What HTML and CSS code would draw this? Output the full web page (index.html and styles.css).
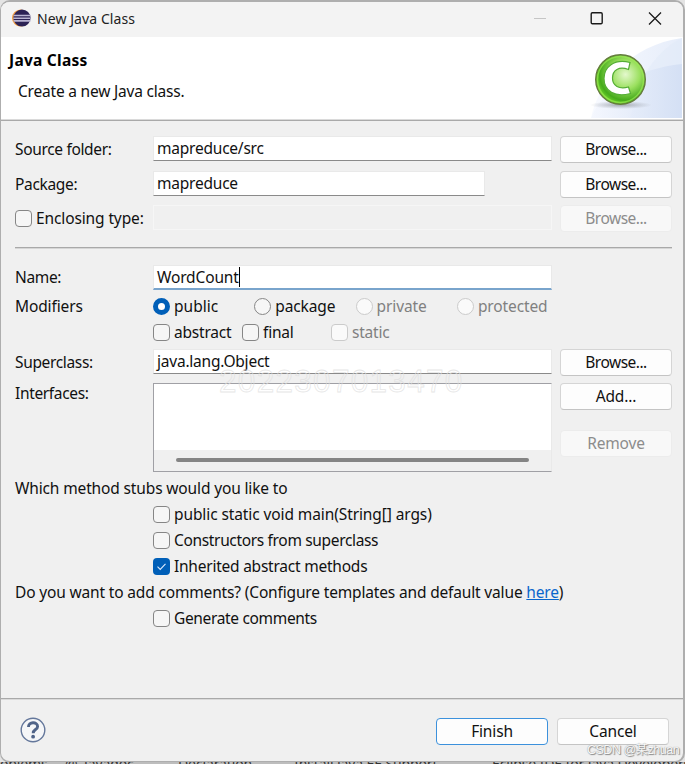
FILE: index.html
```html
<!DOCTYPE html>
<html lang="en">
<head>
<meta charset="utf-8">
<title>New Java Class</title>
<link rel="stylesheet" href="styles.css">
</head>
<body>
<div class="desktop">
  <div class="dialog">
    <header class="titlebar">
      <svg class="app-icon" width="20" height="20" viewBox="0 0 20 20">
        <circle cx="9.600" cy="9" r="8.600" fill="#f39a3b"/>
        <circle cx="11" cy="9" r="8.600" fill="#2c2255"/>
        <path d="M2.600 6.500h16.800M2.300 9.200h17.200M2.600 11.900h16.800" stroke="#b9b4d2" stroke-width="1.600"/>
      </svg>
      <span class="window-title">New Java Class</span>
      <svg class="window-controls" width="132" height="16" viewBox="0 0 132 16">
        <path d="M2 7.500h12" stroke="#c5c5c5"/>
        <rect x="59.200" y="1.700" width="11" height="11" rx="1.200" fill="none" stroke="#1a1a1a" stroke-width="1.400"/>
        <path d="M117 1.500l12 12M129 1.500l-12 12" stroke="#1a1a1a" stroke-width="1.300"/>
      </svg>
    </header>

    <section class="banner">
      <div class="banner-text">
        <h1>Java Class</h1>
        <p>Create a new Java class.</p>
      </div>
      <svg class="banner-art" width="93" height="82" viewBox="0 0 93 82">
        <defs>
          <linearGradient id="sky" x1="0" x2="1"><stop offset="0" stop-color="#f8faff"/><stop offset="1" stop-color="#e6edfa"/></linearGradient>
          <linearGradient id="sky2" x1="0" x2="1"><stop offset="0" stop-color="#f4f7fe"/><stop offset="1" stop-color="#cfdcf3"/></linearGradient>
          <radialGradient id="ball" cx=".6" cy=".4" r=".65"><stop offset="0" stop-color="#e4f8cd"/><stop offset=".45" stop-color="#9be05f"/><stop offset=".8" stop-color="#45aa1b"/><stop offset="1" stop-color="#79df30"/></radialGradient>
          <radialGradient id="shade"><stop offset="0" stop-color="#8f949c" stop-opacity=".8"/><stop offset="1" stop-color="#a0a5ad" stop-opacity="0"/></radialGradient>
        </defs>
        <path d="M1 81C7 48 40 8 92 1v80z" fill="url(#sky)"/>
        <path d="M92 1C75 9 62 24 52 42L40 81h52z" fill="#dfe8f8" opacity=".4"/>
        <path d="M1 81C12 53 46 32 92 27v54z" fill="url(#sky2)" opacity=".75"/>
        <ellipse cx="31" cy="68" rx="31" ry="4" fill="url(#shade)"/>
        <circle cx="30.500" cy="42.500" r="24.800" fill="url(#ball)" stroke="#657c3d" stroke-width="1.400"/>
        <circle cx="30.500" cy="42.500" r="23" fill="none" stroke="#a4ee59" stroke-width="1.500" opacity=".6"/>
        <path d="M40 25.500C24 21.500 14 30 14 41.500C14 54 25 61 40.500 56.500L38.500 50C29 52.500 22.500 49 22.500 41C22.500 33 29 29 38.500 32.500Z" fill="#fff" stroke="#55ad35" stroke-width="1.200"/>
      </svg>
    </section>

    <main class="form">
      <div class="row">
        <label class="label t-tight">Source folder:</label>
        <div class="field"><span>mapreduce/src</span></div>
        <button class="btn btn-browse">Browse...</button>
      </div>
      <div class="row row-package">
        <label class="label t-tight">Package:</label>
        <div class="field field-short"><span>mapreduce</span></div>
        <button class="btn btn-browse">Browse...</button>
      </div>
      <div class="row row-enclosing">
        <label class="label check-label"><i class="check"></i><span>Enclosing type:</span></label>
        <div class="field field-off"></div>
        <button class="btn btn-browse btn-off">Browse...</button>
      </div>
      <hr class="divider">
      <div class="row row-name">
        <label class="label t-tight">Name:</label>
        <div class="field field-focus"><span>WordCount</span><i class="caret"></i></div>
      </div>
      <div class="row row-choice">
        <span class="label">Modifiers</span>
        <div class="radios">
          <label><i class="radio radio-on"></i><span>public</span></label>
          <label><i class="radio"></i><span>package</span></label>
          <label class="off"><i class="radio"></i><span>private</span></label>
          <label class="off"><i class="radio"></i><span>protected</span></label>
        </div>
      </div>
      <div class="row row-choice">
        <span class="label"></span>
        <div class="checks">
          <label><i class="check"></i><span>abstract</span></label>
          <label><i class="check"></i><span>final</span></label>
          <label class="off"><i class="check"></i><span>static</span></label>
        </div>
      </div>
      <div class="row row-super">
        <label class="label t-tight">Superclass:</label>
        <div class="field"><span>java.lang.Object</span></div>
        <button class="btn btn-browse">Browse...</button>
      </div>
      <div class="row row-interfaces">
        <label class="label t-tight">Interfaces:</label>
        <div class="list"><div class="scrollbar"><div class="thumb"></div></div></div>
        <div class="side">
          <button class="btn">Add...</button>
          <button class="btn btn-off">Remove</button>
        </div>
      </div>
      <div class="line t-stubs">Which method stubs would you like to</div>
      <label class="line option t-main"><i class="check"></i><span>public static void main(String[] args)</span></label>
      <label class="line option t-tight"><i class="check"></i><span>Constructors from superclass</span></label>
      <label class="line option t-inherit"><i class="check check-on"><svg width="17" height="17" viewBox="0 0 17 17"><path d="M4.500 8.700l2.700 2.700 5.300-5.500" fill="none" stroke="#dcecff" stroke-width="1.100"/></svg></i><span>Inherited abstract methods</span></label>
      <div class="line t-comments">Do you want to add comments? (Configure templates and default value <a>here</a>)</div>
      <label class="line option t-tight"><i class="check"></i><span>Generate comments</span></label>
    </main>

    <footer class="footer">
      <svg class="help" width="26" height="26" viewBox="0 0 26 26">
        <circle cx="13" cy="13" r="11.800" fill="#f5f6f8" stroke="#64779b" stroke-width="1.400"/>
        <path d="M8.500 10C8.200 4.500 17.600 4.300 17.600 9.400C17.600 12.800 13.200 12.300 13.200 16.200" fill="none" stroke="#506489" stroke-width="2.900"/>
        <circle cx="13.100" cy="19.700" r="1.900" fill="#506489"/>
      </svg>
      <button class="btn btn-primary">Finish</button>
      <button class="btn">Cancel</button>
    </footer>
  </div>
  <div class="behind">
    <span class="tab-a">oblems</span><span class="tab-b">@</span><span class="tab-c">Javadoc</span><span class="tab-d">Declaration</span><span class="tab-e">Install Java EE Support</span><span class="tab-f">Eclipse IDE for Java Developers</span>
  </div>
  <div class="serial">2022307013470</div>
  <div class="credit">CSDN @某zhuan</div>
</div>
</body>
</html>
```
FILE: styles.css
```css
* { box-sizing: border-box; }
body {
  margin: 0;
  background: #e4e4e4;
  color: #111;
  font: 15.5px/26px "Noto Sans", "Noto Sans CJK SC", sans-serif;
  letter-spacing: -.12px;
}
i { font-style: normal; }
.desktop { position: relative; width: 685px; height: 764px; overflow: hidden; }
.dialog {
  display: flex;
  flex-direction: column;
  width: 685px;
  height: 763px;
  border: 2px solid #aeaeae;
  border-left-width: 1.5px;
  border-radius: 10px;
  background: #f0f0f0;
  overflow: hidden;
}
.titlebar {
  display: flex;
  align-items: center;
  flex: none;
  height: 35px;
  padding: 0 19px 2px 10px;
  background: #f3f3f3;
}
.app-icon { margin-top: 1px; }
.window-title { margin-left: 6px; font-size: 14px; letter-spacing: .08px; color: #222; }
.window-controls { margin-left: auto; }
.banner {
  display: flex;
  justify-content: space-between;
  flex: none;
  height: 84px;
  background: #fff;
  border-bottom: 1px solid #a9a9a9;
  box-shadow: inset 0 -1px #dadada;
}
.banner-text { padding: 10px 0 0 8px; }
.banner h1 { margin: 0; font-size: 15.5px; line-height: 26px; letter-spacing: .25px; color: #000; }
.banner p { margin: 5px 0 0 9px; letter-spacing: -.2px; }
.form { flex: 1; padding: 15px 11px 0 14px; }
.row { display: flex; height: 27px; }
.label { width: 138px; flex: none; white-space: nowrap; }
.t-tight { letter-spacing: -.34px; }
.t-stubs { letter-spacing: -.14px; }
.t-main { letter-spacing: -.1px; }
.t-inherit { letter-spacing: -.23px; }
.t-comments { letter-spacing: -.16px; }
.field {
  display: flex;
  width: 399px;
  height: 25px;
  margin-right: 8px;
  padding-left: 3px;
  line-height: 23px;
  letter-spacing: -.22px;
  background: #fff;
  border: 1px solid #e9e9e9;
  border-bottom-color: #8a8a8a;
}
.field-short { width: 332px; margin-right: 75px; }
.field-off { background: #f0f0f0; border-color: #f6f6f6; }
.field-focus { letter-spacing: -.15px; border-bottom: 2px solid #79a4cc; }
.caret { width: 1px; height: 20px; margin-top: 1px; background: #000; }
.btn {
  width: 112px;
  height: 27px;
  flex: none;
  padding: 0 0 1px;
  border: 1px solid #d5d5d5;
  border-bottom-color: #c4c4c4;
  border-radius: 4px;
  background: #fdfdfd;
  color: #111;
  font: inherit;
  letter-spacing: -.15px;
  line-height: 24px;
}
.btn-browse { letter-spacing: -.5px; }
.btn-off { color: #8c8c8c; background: #f8f8f8; border-color: #ececec; }
.row-package { margin-top: 8px; }
.row-enclosing { margin-top: 7px; }
.check-label { height: 26px; }
.check-label, .checks label, .radios label, .option { display: flex; align-items: center; gap: 4px; }
.check, .radio {
  width: 17px;
  height: 17px;
  flex: none;
  border: 1px solid #868686;
  border-radius: 4px;
  background: #f6f6f6;
}
.radio { border-radius: 50%; }
.radio-on { border: 5px solid #005fb8; background: #fff; }
.check-on { border: 0; background: #005fb8; }
.check-on svg { display: block; }
.off { color: #808080; }
.off i { border-color: #cbcbcb; background: #fafafa; }
.divider {
  height: 2px;
  margin: 15px 0 15px;
  border: 0;
  background: #d6d6d6;
  border-top: 1px solid #a9a9a9;
}
.row-name { height: 29px; padding-top: 1px; }
.row-name .label { line-height: 25px; }
.row-choice { height: 26px; }
.radios { display: grid; grid-template-columns: repeat(4, 101.3px); }
.radios label:first-child { letter-spacing: .02px; }
.checks { display: grid; grid-template-columns: 89px 89px 89px; letter-spacing: -.2px; }
.row-super { margin-top: 4px; }
.row-interfaces { height: 89px; margin-top: 7px; }
.row-interfaces .label { line-height: 20px; }
.list {
  display: flex;
  flex-direction: column;
  justify-content: flex-end;
  width: 399px;
  margin-right: 8px;
  border: 1px solid #a0a0a5;
  border-right-color: #e9e9e9;
  background: #fff;
}
.scrollbar { height: 21px; padding: 8px 22px; background: #f0f0f0; }
.thumb { height: 4px; border-radius: 2px; background: #858585; }
.side { display: flex; flex-direction: column; gap: 20px; }
.line { height: 26px; white-space: nowrap; }
.row-interfaces + .line { margin-top: 3px; }
.option { padding-left: 138px; }
a { color: #0a66cc; text-decoration: underline; }
.footer {
  display: flex;
  align-items: center;
  flex: none;
  height: 63px;
  padding: 2px 14px 0 19px;
  gap: 9px;
  border-top: 1px solid #a9a9a9;
  box-shadow: inset 0 1px #dadada;
}
.help { margin: 0 auto 3px 0; }
.btn-primary { border-color: #3c91dc; }
.behind {
  position: absolute;
  left: 0;
  top: 762px;
  width: 685px;
  height: 2px;
  overflow: hidden;
  display: flex;
  font-size: 14px;
  line-height: 12px;
  white-space: nowrap;
  color: #333;
  background: #bdbdbd;
}
.behind span { flex: none; margin-top: -4px; }
.tab-a { width: 65px; }
.tab-b { width: 19px; }
.tab-c { width: 94px; }
.tab-d { width: 116px; }
.tab-e { width: 198px; }
.serial {
  position: absolute;
  left: 219px;
  top: 364px;
  font: 31.5px/34px "Liberation Sans", sans-serif;
  letter-spacing: 1.3px;
  color: transparent;
  -webkit-text-stroke: .8px rgba(222, 222, 222, .75);
}
.credit {
  position: absolute;
  left: 587px;
  top: 741px;
  font: 12.5px/18px "Liberation Sans", "Noto Sans CJK SC", sans-serif;
  letter-spacing: -.5px;
  white-space: nowrap;
  color: #f8f8f8;
  text-shadow: 1px 1px 1px #888, 0 0 1px #888;
}
```
